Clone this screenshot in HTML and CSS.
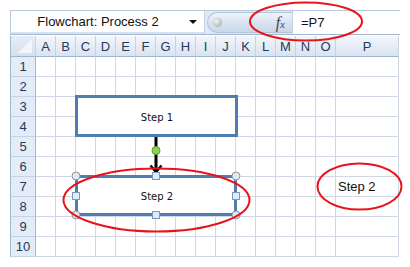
FILE: index.html
```html
<!DOCTYPE html>
<html lang="en">
<head>
  <meta charset="UTF-8">
  <title>Flowchart: Process 2</title>
  <link rel="stylesheet" href="styles.css">
</head>
<body>

  <div class="sheet">
    <!-- formula bar -->
    <div class="formula-bar">
      <div class="name-box">
        <span class="name-text">Flowchart: Process 2</span>
        <span class="drop"></span>
      </div>
      <div class="pill">
        <span class="knob"></span>
        <span class="fx"><i>f</i><small>x</small></span>
      </div>
      <div class="formula">=P7</div>
    </div>

    <!-- worksheet grid -->
    <div class="grid">
      <div class="corner"></div>
      <div class="ch">A</div><div class="ch">B</div><div class="ch">C</div><div class="ch">D</div><div class="ch">E</div><div class="ch">F</div><div class="ch">G</div><div class="ch">H</div><div class="ch">I</div><div class="ch">J</div><div class="ch">K</div><div class="ch">L</div><div class="ch">M</div><div class="ch">N</div><div class="ch">O</div><div class="ch">P</div>

      <div class="rh">1</div><div class="c"></div><div class="c"></div><div class="c"></div><div class="c"></div><div class="c"></div><div class="c"></div><div class="c"></div><div class="c"></div><div class="c"></div><div class="c"></div><div class="c"></div><div class="c"></div><div class="c"></div><div class="c"></div><div class="c"></div><div class="c"></div>
      <div class="rh">2</div><div class="c"></div><div class="c"></div><div class="c"></div><div class="c"></div><div class="c"></div><div class="c"></div><div class="c"></div><div class="c"></div><div class="c"></div><div class="c"></div><div class="c"></div><div class="c"></div><div class="c"></div><div class="c"></div><div class="c"></div><div class="c"></div>
      <div class="rh">3</div><div class="c"></div><div class="c"></div><div class="c"></div><div class="c"></div><div class="c"></div><div class="c"></div><div class="c"></div><div class="c"></div><div class="c"></div><div class="c"></div><div class="c"></div><div class="c"></div><div class="c"></div><div class="c"></div><div class="c"></div><div class="c"></div>
      <div class="rh">4</div><div class="c"></div><div class="c"></div><div class="c"></div><div class="c"></div><div class="c"></div><div class="c"></div><div class="c"></div><div class="c"></div><div class="c"></div><div class="c"></div><div class="c"></div><div class="c"></div><div class="c"></div><div class="c"></div><div class="c"></div><div class="c"></div>
      <div class="rh">5</div><div class="c"></div><div class="c"></div><div class="c"></div><div class="c"></div><div class="c"></div><div class="c"></div><div class="c"></div><div class="c"></div><div class="c"></div><div class="c"></div><div class="c"></div><div class="c"></div><div class="c"></div><div class="c"></div><div class="c"></div><div class="c"></div>
      <div class="rh">6</div><div class="c"></div><div class="c"></div><div class="c"></div><div class="c"></div><div class="c"></div><div class="c"></div><div class="c"></div><div class="c"></div><div class="c"></div><div class="c"></div><div class="c"></div><div class="c"></div><div class="c"></div><div class="c"></div><div class="c"></div><div class="c"></div>
      <div class="rh">7</div><div class="c"></div><div class="c"></div><div class="c"></div><div class="c"></div><div class="c"></div><div class="c"></div><div class="c"></div><div class="c"></div><div class="c"></div><div class="c"></div><div class="c"></div><div class="c"></div><div class="c"></div><div class="c"></div><div class="c"></div><div class="c val">Step 2</div>
      <div class="rh">8</div><div class="c"></div><div class="c"></div><div class="c"></div><div class="c"></div><div class="c"></div><div class="c"></div><div class="c"></div><div class="c"></div><div class="c"></div><div class="c"></div><div class="c"></div><div class="c"></div><div class="c"></div><div class="c"></div><div class="c"></div><div class="c"></div>
      <div class="rh">9</div><div class="c"></div><div class="c"></div><div class="c"></div><div class="c"></div><div class="c"></div><div class="c"></div><div class="c"></div><div class="c"></div><div class="c"></div><div class="c"></div><div class="c"></div><div class="c"></div><div class="c"></div><div class="c"></div><div class="c"></div><div class="c"></div>
      <div class="rh">10</div><div class="c"></div><div class="c"></div><div class="c"></div><div class="c"></div><div class="c"></div><div class="c"></div><div class="c"></div><div class="c"></div><div class="c"></div><div class="c"></div><div class="c"></div><div class="c"></div><div class="c"></div><div class="c"></div><div class="c"></div><div class="c"></div>
    </div>

    <!-- shapes drawn on top of the sheet -->
    <svg class="drawing" width="410" height="267" viewBox="0 0 410 267">
      <!-- Step 1 -->
      <rect x="76.5" y="96.5" width="160" height="39" class="shape"/>
      <text x="157" y="121" class="shape-text">Step 1</text>

      <!-- connector -->
      <line x1="156" y1="137" x2="156" y2="172" class="conn"/>
      <path d="M150.5 165.5 L156 172 L161.5 165.5" class="conn-head"/>
      <circle cx="156" cy="150.5" r="4" class="green"/>

      <!-- Step 2 (selected) -->
      <rect x="76.5" y="176.5" width="159" height="38" class="shape"/>
      <text x="157" y="200" class="shape-text">Step 2</text>
      <circle cx="76" cy="176" r="4" class="h-round"/>
      <circle cx="236" cy="176" r="4" class="h-round"/>
      <circle cx="76" cy="215" r="4" class="h-round"/>
      <circle cx="236" cy="215" r="4" class="h-round"/>
      <rect x="152.5" y="172.5" width="7" height="7" class="h-square"/>
      <rect x="152.5" y="211.5" width="7" height="7" class="h-square"/>
      <rect x="72.5" y="192.5" width="7" height="7" class="h-square"/>
      <rect x="232.5" y="192.5" width="7" height="7" class="h-square"/>

      <!-- red marks -->
      <ellipse cx="306" cy="21.5" rx="56" ry="19" class="mark"/>
      <ellipse cx="156.5" cy="200" rx="93" ry="31.5" class="mark"/>
      <ellipse cx="359.5" cy="186.5" rx="42" ry="23" class="mark"/>
    </svg>
  </div>

</body>
</html>
```

FILE: styles.css
```css
body {
  margin: 0;
  background-color: #ffffff;
  font-family: 'Liberation Sans', Arial, sans-serif;
}

.sheet {
  position: relative;
  width: 410px;
  height: 267px;
  padding: 10px 0 0 10px;
  box-sizing: border-box;
}

/* formula bar */
.formula-bar {
  display: flex;
  align-items: stretch;
  width: 390px;
  height: 25px;
  box-sizing: border-box;
  border-top: 1px solid #b9c9dc;
  border-bottom: 1px solid #a3b6cd;
  background-color: #dfe8f4;
}

.name-box {
  display: flex;
  align-items: center;
  width: 195px;
  box-sizing: border-box;
  background-color: #fff;
  border-left: 1px solid #b9c9dc;
  border-right: 1px solid #c4d2e3;
  border-bottom: 2px solid #d7e2f0;
}

.name-text {
  flex: 1;
  text-align: center;
  font-size: 13px;
  color: #111;
  padding-left: 2px;
}

.drop {
  width: 0;
  height: 0;
  margin: 0 7px 0 6px;
  border-left: 4px solid transparent;
  border-right: 4px solid transparent;
  border-top: 4px solid #111;
}

.pill {
  display: flex;
  align-items: center;
  justify-content: space-between;
  width: 85px;
  margin: 1px 0 1px 2px;
  box-sizing: border-box;
  border: 1px solid #b4c4d8;
  border-right: none;
  border-radius: 11px 0 0 11px;
  background: linear-gradient(#eef3fa, #d7e2f0 55%, #c9d7ea);
}

.knob {
  width: 9px;
  height: 9px;
  margin-left: 5px;
  border-radius: 50%;
  background: radial-gradient(circle at 35% 35%, #f4f4f4, #b6b9bd 70%, #9da2a8);
}

.fx {
  font-family: 'Liberation Serif', serif;
  font-size: 16px;
  color: #3f4650;
  margin-right: 7px;
}

.fx small {
  font-size: 11px;
  font-style: italic;
}

.formula {
  flex: 1;
  display: flex;
  align-items: center;
  padding-left: 8px;
  background-color: #fff;
  font-size: 13px;
  color: #111;
  border-left: 1px solid #c4d2e3;
}

/* worksheet */
.grid {
  display: grid;
  grid-template-columns: 26px repeat(15, 20px) 63px;
  grid-template-rows: 21px repeat(10, 20px);
  margin-top: 1px;
}

.grid > div {
  box-sizing: border-box;
  border-right: 1px solid #d0d7e5;
  border-bottom: 1px solid #d0d7e5;
}

.corner {
  position: relative;
  background: linear-gradient(#e4ecf7, #d5e0ee);
  border-left: 1px solid #9eb6ce;
}

.grid > .corner,
.grid > .ch {
  border-right: 1px solid #c5d3e4;
  border-bottom: 1px solid #9eb6ce;
}

.corner::after {
  content: "";
  position: absolute;
  right: 3px;
  bottom: 3px;
  border-left: 14px solid transparent;
  border-bottom: 14px solid #f2f5f9;
}

.ch {
  display: flex;
  align-items: center;
  justify-content: center;
  background: linear-gradient(#f3f6fb, #e4ebf5 60%, #dae3ef);
  font-size: 13px;
  color: #1f3a5c;
}

.grid > .rh {
  display: flex;
  align-items: center;
  justify-content: center;
  background-color: #e4ecf7;
  border-left: 1px solid #9eb6ce;
  border-right: 1px solid #9eb6ce;
  border-bottom: 1px solid #c5d3e4;
  font-size: 13px;
  color: #1f3a5c;
}

.val {
  display: flex;
  align-items: center;
  padding-left: 2px;
  font-size: 13px;
  color: #111;
}

/* drawing layer */
.drawing {
  position: absolute;
  left: 0;
  top: 0;
}

.shape {
  fill: #fff;
  stroke: #4f7cb1;
  stroke-width: 3;
}

.shape-text {
  font-family: 'DejaVu Sans', sans-serif;
  font-size: 10px;
  fill: #111;
  text-anchor: middle;
}

.conn {
  stroke: #000;
  stroke-width: 3;
}

.conn-head {
  fill: none;
  stroke: #000;
  stroke-width: 2.5;
}

.green {
  fill: #8fd24e;
  stroke: #5d9a2e;
  stroke-width: 1;
}

.h-round {
  fill: #e3e9ee;
  stroke: #8c99a5;
  stroke-width: 1;
}

.h-square {
  fill: #dcedf9;
  stroke: #7a9bbb;
  stroke-width: 1;
}

.mark {
  fill: none;
  stroke: #e8141c;
  stroke-width: 2;
}
```
